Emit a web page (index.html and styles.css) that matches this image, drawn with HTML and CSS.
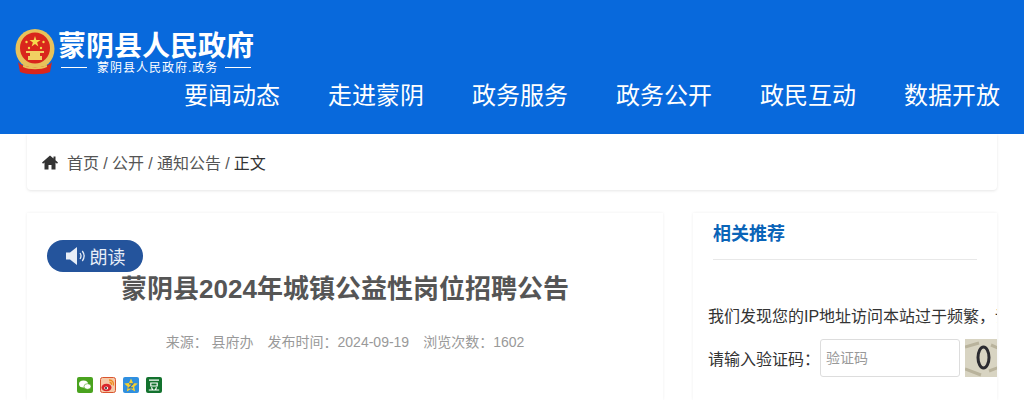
FILE: index.html
```html
<!DOCTYPE html>
<html lang="zh-CN">

<head>
    <meta charset="UTF-8">
    <title>蒙阴县2024年城镇公益性岗位招聘公告</title>
    <link rel="stylesheet" href="styles.css">
</head>

<body>
    <header class="site-header">
        <div class="logo">
            <svg class="emblem" viewBox="0 0 40 46" width="40" height="46">
                <ellipse cx="20" cy="20" rx="19.500" ry="20" fill="#e8c25a" />
                <ellipse cx="20" cy="19" rx="15" ry="15.500" fill="#d9261c" />
                <polygon points="20,7 21.300,11 25.500,11 22.100,13.500 23.400,17.500 20,15 16.600,17.500 17.900,13.500 14.500,11 18.700,11" fill="#f5d94e" />
                <circle cx="11.500" cy="13" r="1.200" fill="#f5d94e" />
                <circle cx="28.500" cy="13" r="1.200" fill="#f5d94e" />
                <circle cx="14" cy="19" r="1.200" fill="#f5d94e" />
                <circle cx="26" cy="19" r="1.200" fill="#f5d94e" />
                <path d="M13 31V27H15V24H25V27H27V31Z" fill="#f1cf62" />
                <rect x="11" y="22" width="18" height="2" fill="#f1cf62" />
                <path d="M3 33C8 40 32 40 37 33L35 43C28 46 12 46 5 43Z" fill="#d9261c" />
                <path d="M8 36C14 39 26 39 32 36V38C26 41 14 41 8 38Z" fill="#e8c25a" />
            </svg>
            <div class="logo-text">
                <div class="logo-name">蒙阴县人民政府</div>
                <div class="logo-sub"><span class="logo-rule"></span>蒙阴县人民政府.政务<span class="logo-rule"></span></div>
            </div>
        </div>
        <nav class="main-nav">
            <a>要闻动态</a>
            <a>走进蒙阴</a>
            <a>政务服务</a>
            <a>政务公开</a>
            <a>政民互动</a>
            <a>数据开放</a>
        </nav>
    </header>

    <div class="breadcrumb">
        <svg class="home-icon" viewBox="0 0 16 15" width="16" height="15">
            <path d="M8 0.500L0 7.500L1 8.700L2.500 7.500V14.500H6.500V10H9.500V14.500H13.500V7.500L15 8.700L16 7.500L13.500 5.300V1.500H11.500V3.600Z" fill="#333" />
        </svg>
        <div class="crumbs"><a>首页</a> / <a>公开</a> / <a>通知公告</a> / <span class="current">正文</span></div>
    </div>

    <main class="content">
        <article class="article-card">
            <button class="read-btn">
                <svg viewBox="0 0 22 20" width="22" height="20">
                    <path d="M1 6.500H5L12 1V19L5 13.500H1Z" fill="#e6edf7" />
                    <path d="M15 7C16.200 8.800 16.200 11.200 15 13M17.300 5C19.500 8 19.500 12 17.300 15" fill="none" stroke="#e6edf7" stroke-width="1.300" />
                </svg>
                朗读
            </button>
            <h1 class="article-title">蒙阴县2024年城镇公益性岗位招聘公告</h1>
            <div class="article-meta">
                <span>来源： 县府办</span>
                <span>发布时间：2024-09-19</span>
                <span>浏览次数：1602</span>
            </div>
            <div class="share">
                <svg viewBox="0 0 16 16" width="16" height="16">
                    <rect width="16" height="16" rx="2" fill="#4aa31f" />
                    <ellipse cx="6.500" cy="7" rx="4.500" ry="3.500" fill="#fff" />
                    <ellipse cx="10.500" cy="9.500" rx="3.500" ry="2.800" fill="#fff" stroke="#4aa31f" stroke-width=".6" />
                </svg>
                <svg viewBox="0 0 16 16" width="16" height="16">
                    <rect x=".5" y=".5" width="15" height="15" rx="2" fill="#f6c9a8" stroke="#d9552e" />
                    <ellipse cx="6.500" cy="10.500" rx="5" ry="3.800" fill="#d8262c" />
                    <ellipse cx="6.200" cy="11" rx="2" ry="1.500" fill="#fff" />
                    <circle cx="6" cy="11" r="1" fill="#222" />
                    <path d="M9 3C12.500 3 14 5.500 13.300 8.500M9.500 5.300C11 5.300 11.700 6.300 11.300 7.800" fill="none" stroke="#ee8b1e" stroke-width="1.400" />
                </svg>
                <svg viewBox="0 0 16 16" width="16" height="16">
                    <rect width="16" height="16" rx="2" fill="#2f8fe0" />
                    <polygon points="8,1.500 10,6 14.800,6.500 11.200,9.700 12.200,14.500 8,12 3.800,14.500 4.800,9.700 1.200,6.500 6,6" fill="#f6d02f" />
                    <path d="M6 6.800H10L6 10.800H10" fill="none" stroke="#2a6fb8" stroke-width="1.200" />
                </svg>
                <svg viewBox="0 0 16 16" width="16" height="16">
                    <rect width="16" height="16" rx="2" fill="#13722e" />
                    <path d="M3 3.200H13M4.800 6H11.200V9H4.800ZM5.500 10.300L6.500 12.800M10.500 10.300L9.500 12.800M2.800 13H13.200" fill="none" stroke="#fff" stroke-width="1.200" />
                </svg>
            </div>
        </article>

        <aside class="side-card">
            <h2 class="side-title">相关推荐</h2>
            <div class="verify">
                <p class="verify-msg">我们发现您的IP地址访问本站过于频繁，请输入验证码后继续访问</p>
                <div class="verify-row">
                    <label for="code">请输入验证码：</label>
                    <input id="code" class="verify-input" placeholder="验证码">
                    <svg class="captcha" viewBox="0 0 40 38" width="40" height="38">
                        <rect width="40" height="38" fill="#d8d4c2" />
                        <path d="M0 8L14 4M0 30L16 36M26 6L40 12M24 32L40 26" stroke="#b9b39c" stroke-width="3" />
                        <ellipse cx="18.500" cy="18.500" rx="5.500" ry="10.500" fill="none" stroke="#2b2b30" stroke-width="3" />
                    </svg>
                </div>
            </div>
        </aside>
    </main>
</body>

</html>
```

FILE: styles.css
```css
body {
    margin: 0;
    height: 400px;
    overflow: hidden;
    background: #fff;
    font-family: "Liberation Sans", "Noto Sans CJK SC", sans-serif;
    color: #333;
}

/* Header */
.site-header {
    height: 134px;
    box-sizing: border-box;
    padding: 29px 24px 0 15px;
    background: #0869dc;
    color: #fff;
}

.logo {
    display: flex;
    align-items: center;
    gap: 3px;
    height: 46px;
}

.emblem {
    flex: none;
}

.logo-name {
    font-size: 28px;
    line-height: 34px;
    font-weight: bold;
    white-space: nowrap;
}

.logo-sub {
    display: flex;
    align-items: center;
    gap: 10px;
    margin-top: -3px;
    padding-left: 3px;
    font-size: 12px;
    line-height: 14px;
    letter-spacing: 1px;
    white-space: nowrap;
}

.logo-rule {
    width: 26px;
    height: 1px;
    background: #fff;
}

.logo-rule:last-child {
    margin-left: -3px;
}

.main-nav {
    display: flex;
    justify-content: flex-end;
    gap: 48px;
    margin-top: 3px;
    font-size: 24px;
    line-height: 36px;
}

/* Breadcrumb */
.breadcrumb {
    display: flex;
    align-items: center;
    height: 56px;
    margin: 0 27px;
    padding: 0 15px;
    border-radius: 0 0 4px 4px;
    box-shadow: 0 1px 3px rgba(0, 0, 0, 0.1);
    font-size: 16px;
    word-spacing: -0.200px;
    color: #555;
}

.home-icon {
    margin-right: 9px;
}

.current {
    color: #333;
}

/* Content */
.content {
    display: grid;
    grid-template-columns: 636px 304px;
    gap: 30px;
    margin: 23px 27px 0;
}

.article-card,
.side-card {
    position: relative;
    height: 187px;
    overflow: hidden;
    box-sizing: border-box;
    box-shadow: 0 0 3px rgba(0, 0, 0, 0.07);
}

.read-btn {
    position: absolute;
    top: 27px;
    left: 20px;
    display: flex;
    align-items: center;
    justify-content: center;
    gap: 3px;
    width: 96px;
    height: 32px;
    padding: 0;
    border: 0;
    border-radius: 16px;
    background: #24549c;
    color: #e6edf7;
    font-family: inherit;
    font-size: 18px;
}

.article-title {
    margin: 58px 0 0;
    font-size: 26px;
    line-height: 36px;
    font-weight: bold;
    color: #555;
    text-align: center;
}

.article-meta {
    display: flex;
    justify-content: center;
    gap: 14px;
    margin-top: 25px;
    font-size: 14px;
    line-height: 20px;
    color: #999;
}

.share {
    display: flex;
    gap: 7px;
    margin-top: 25px;
    padding-left: 50px;
}

.side-title {
    margin: 0 20px 0;
    padding: 7px 0 11px;
    border-bottom: 1px solid #e8e8e8;
    font-size: 18px;
    line-height: 28px;
    color: #0a64b8;
}

.verify {
    padding: 46px 0 0 15px;
    font-size: 16px;
    white-space: nowrap;
}

.verify-msg {
    margin: 0;
    line-height: 22px;
}

.verify-row {
    display: flex;
    align-items: center;
    margin-top: 11px;
}

.verify-row label {
    width: 112px;
    flex: none;
}

.verify-input {
    flex: none;
    width: 140px;
    height: 38px;
    box-sizing: border-box;
    padding: 0 5px;
    border: 1px solid #ddd;
    border-radius: 3px;
    font-family: inherit;
    font-size: 14px;
}

.verify-input::placeholder {
    color: #999;
}

.captcha {
    flex: none;
    margin-left: 5px;
}
```
